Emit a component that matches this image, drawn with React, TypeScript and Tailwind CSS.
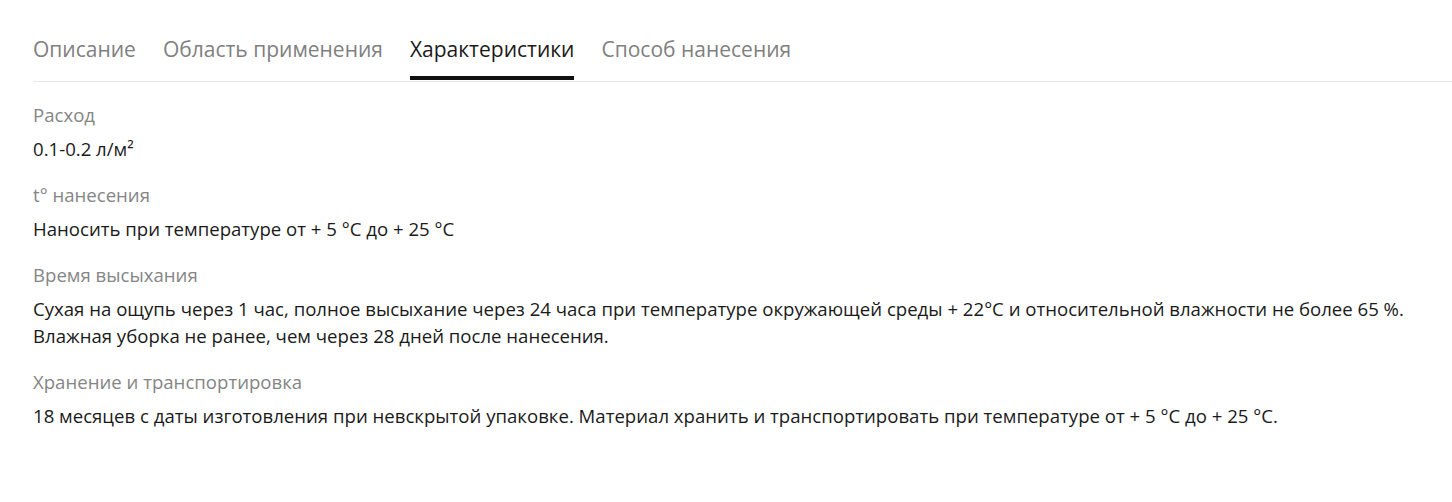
import { useState } from 'react';

const tabs = ['Описание', 'Область применения', 'Характеристики', 'Способ нанесения'];

const specs = [
  { label: 'Расход', value: ['0.1-0.2 л/м²'] },
  { label: 't° нанесения', value: ['Наносить при температуре от + 5 °С до + 25 °С'] },
  {
    label: 'Время высыхания',
    value: [
      'Сухая на ощупь через 1 час, полное высыхание через 24 часа при температуре окружающей среды + 22°С и относительной влажности не более 65 %.',
      'Влажная уборка не ранее, чем через 28 дней после нанесения.',
    ],
  },
  {
    label: 'Хранение и транспортировка',
    value: ['18 месяцев с даты изготовления при невскрытой упаковке. Материал хранить и транспортировать при температуре от + 5 °С до + 25 °С.'],
  },
];

const App = () => {
  const [active, setActive] = useState(2);

  return (
    <div className="min-h-[502px] bg-white pl-[33px] pt-[35px] font-['Open_Sans',sans-serif]">
      {/* Tabs */}
      <nav className="flex gap-[27px] border-b border-[#e8e8ea] pb-px">
        {tabs.map((tab, i) => (
          <button
            key={tab}
            onClick={() => setActive(i)}
            className={
              i === active
                ? 'border-b-4 border-[#111111] pb-[13px] text-[21px] leading-[28px] text-[#1a1a1a]'
                : 'border-b-4 border-transparent pb-[13px] text-[21px] leading-[28px] text-[#808080] hover:text-[#1a1a1a]'
            }
          >
            {tab}
          </button>
        ))}
      </nav>

      {/* Specs */}
      <div className="flex flex-col gap-[20px] pt-[20px]">
        {specs.map((s) => (
          <div key={s.label}>
            <div className="mb-[7px] text-[18.6px] leading-[26px] text-[#858585]">{s.label}</div>
            {s.value.map((line) => (
              <div key={line} className="text-[18.6px] leading-[27px] text-[#1a1a1a]">
                {line}
              </div>
            ))}
          </div>
        ))}
      </div>
    </div>
  );
};

export default App;
